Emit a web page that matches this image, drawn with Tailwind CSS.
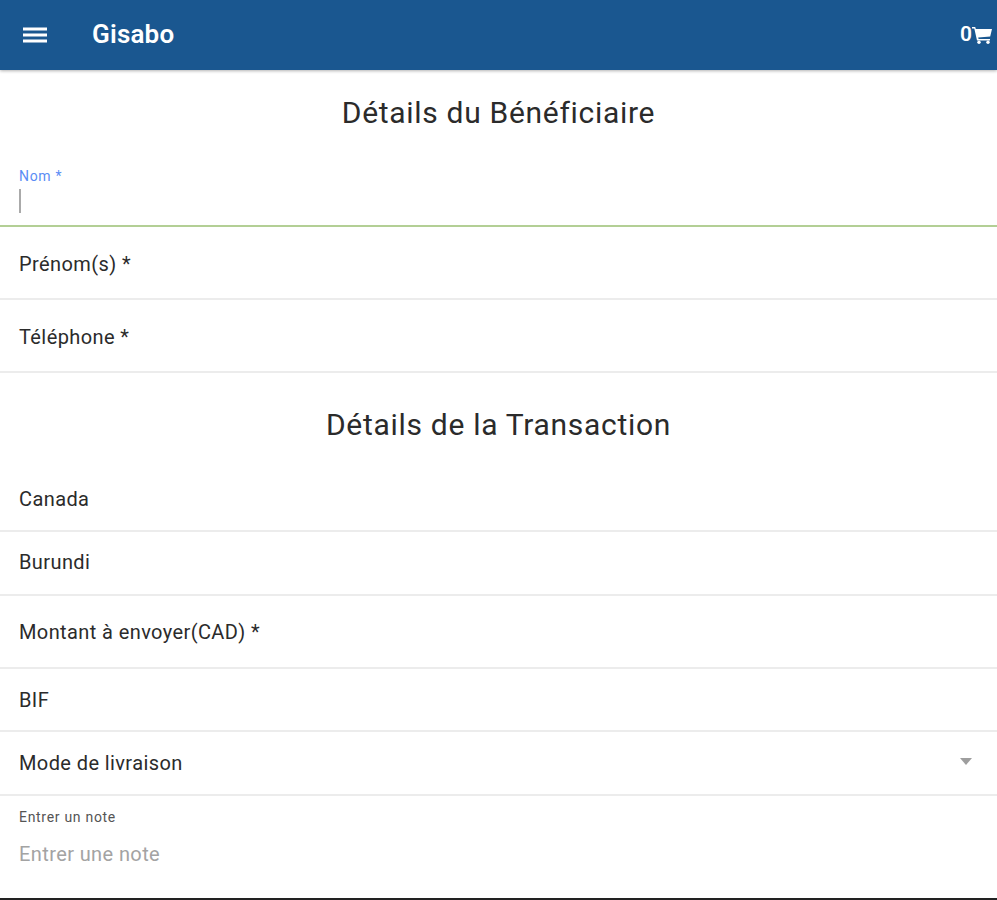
<!DOCTYPE html>
<html lang="fr">
<head>
    <meta charset="UTF-8">
    <title>Gisabo</title>
    <script src="https://cdn.jsdelivr.net/npm/@tailwindcss/browser@4"></script>
</head>
<body class="h-[900px] overflow-hidden bg-white font-['Roboto',sans-serif] text-[#2b2b2b]">
    <header class="flex h-[70px] items-center bg-[#1a5790] text-white shadow-[0_1px_3px_rgba(0,0,0,0.3)]">
        <svg class="ml-[22px] h-[18px] w-[26px]" viewBox="0 0 26 18" fill="currentColor">
            <rect x="1" y="1.5" width="24" height="3"/>
            <rect x="1" y="7.5" width="24" height="3"/>
            <rect x="1" y="13.5" width="24" height="3"/>
        </svg>
        <h1 class="ml-[44px] pb-[2px] text-[26px] font-semibold tracking-[0.2px]">Gisabo</h1>
        <div class="ml-auto mr-[5px] flex items-center">
            <span class="text-[21px] font-semibold">0</span>
            <svg class="h-[18px] w-[20px]" viewBox="0 0 20 18" fill="currentColor">
                <path d="M0 1h3.200l.6 2H20l-1.800 7.500-12 1 .4 1.500H18v1.600H5L2.300 2.600H0z"/>
                <circle cx="7" cy="16.300" r="1.700"/>
                <circle cx="16" cy="16.300" r="1.700"/>
            </svg>
        </div>
    </header>

    <main>
        <h2 class="flex h-[85px] items-center justify-center text-[30px] leading-none tracking-[0.7px]">Détails du Bénéficiaire</h2>
        <div class="h-[72px] border-b-2 border-[#b3cf95] pl-[19px]">
            <p class="pt-[13px] text-[14px] leading-4 tracking-[0.7px] text-[#5b8df5]">Nom *</p>
            <div class="mt-[5px] h-[24px] w-[2px] bg-[#aaa]"></div>
        </div>
        <div class="flex h-[73px] items-center border-b-2 border-[#ececec] pt-[2px] pl-[19px] text-[20px] tracking-[0.4px]">Prénom(s) *</div>
        <div class="flex h-[73px] items-center border-b-2 border-[#ececec] pt-[2px] pl-[19px] text-[20px] tracking-[0.4px]">Téléphone *</div>
        <h2 class="flex h-[96px] items-center justify-center pt-[7px] text-[30px] leading-none tracking-[0.7px]">Détails de la Transaction</h2>
        <div class="flex h-[63px] items-center border-b-2 border-[#ececec] pb-[2px] pl-[19px] text-[20px] tracking-[0.4px]">Canada</div>
        <div class="flex h-[64px] items-center border-b-2 border-[#ececec] pb-[2px] pl-[19px] text-[20px] tracking-[0.4px]">Burundi</div>
        <div class="flex h-[73px] items-center border-b-2 border-[#ececec] pl-[19px] text-[20px] tracking-[0.4px]">Montant à envoyer(CAD) *</div>
        <div class="flex h-[63px] items-center border-b-2 border-[#ececec] pl-[19px] text-[20px] tracking-[0.4px]">BIF</div>
        <div class="flex h-[64px] items-center justify-between border-b-2 border-[#ececec] pl-[19px] pr-[25px] text-[20px] tracking-[0.4px]">
            Mode de livraison
            <span class="mb-[4px] h-0 w-0 border-x-[6px] border-t-[7px] border-x-transparent border-t-[#9e9e9e]"></span>
        </div>
        <div class="pl-[19px]">
            <p class="pt-[13px] text-[14px] leading-4 tracking-[0.7px] text-[#555]">Entrer un note</p>
            <p class="mt-[17px] text-[20px] leading-6 tracking-[0.4px] text-[#a3a3a3]">Entrer une note</p>
        </div>
    </main>
    <div class="fixed inset-x-0 bottom-0 h-[2px] bg-[#222]"></div>
</body>
</html>
